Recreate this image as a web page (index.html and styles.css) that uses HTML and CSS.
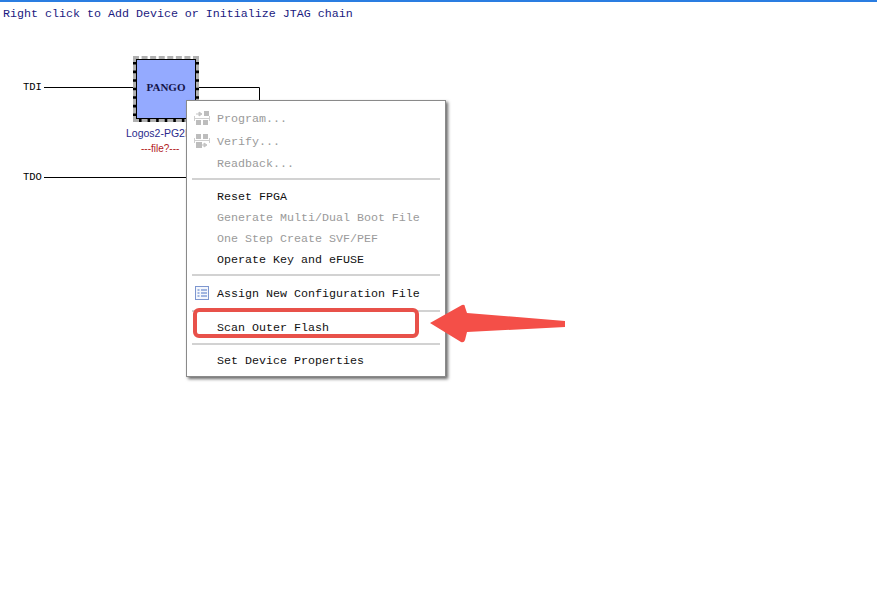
FILE: index.html
```html
<!DOCTYPE html>
<html>
  <head>
    <meta charset="utf-8" />
    <title>JTAG chain</title>
    <link rel="stylesheet" href="styles.css">
  </head>
  <body>
    <div class="hint">Right click to Add Device or Initialize JTAG chain</div>

    <div class="chain">
      <svg class="wires" width="877" height="601">
        <path d="M44 87.5H135M197 87.5H259.5V110M44 177.5H190" fill="none" stroke="#000" stroke-width="1" />
      </svg>
      <span class="pin pin-tdi">TDI</span>
      <span class="pin pin-tdo">TDO</span>
      <div class="chip"><div class="chip-body">PANGO</div></div>
      <div class="chip-name">Logos2-PG2L</div>
      <div class="chip-file">---file?---</div>
    </div>

    <div class="menu">
      <div class="group group-first">
        <div class="item item-tall disabled">
          <span class="icon">
            <svg width="16" height="16" viewBox="0 0 16 16">
              <path d="M0 8.500H16M.5 6V11M15.500 6V11" stroke="#cfcfcf" fill="none" />
              <path d="M2 4H5M5 2L8 4L5 6Z" stroke="#c4c4c4" fill="#c4c4c4" />
              <rect x="10" y="1" width="5" height="5" fill="#bdbdbd" />
              <rect x="2" y="10" width="5" height="5" fill="#bdbdbd" />
              <rect x="9" y="10" width="5" height="5" fill="#bdbdbd" />
            </svg>
          </span>
          Program...
        </div>
        <div class="item item-tall disabled">
          <span class="icon">
            <svg width="16" height="16" viewBox="0 0 16 16">
              <path d="M0 7.500H16M.5 5V10M15.500 5V10" stroke="#cfcfcf" fill="none" />
              <rect x="2" y="1" width="5" height="5" fill="#bdbdbd" />
              <rect x="9" y="1" width="5" height="5" fill="#bdbdbd" />
              <rect x="2" y="9" width="6" height="6" fill="#bdbdbd" />
              <path d="M8 12H10M10 10L13 12L10 14Z" stroke="#c4c4c4" fill="#c4c4c4" />
            </svg>
          </span>
          Verify...
        </div>
        <div class="item item-tall disabled"><span class="icon"></span>Readback...</div>
      </div>
      <div class="sep"></div>
      <div class="group group-reset">
        <div class="item"><span class="icon"></span>Reset FPGA</div>
        <div class="item disabled"><span class="icon"></span>Generate Multi/Dual Boot File</div>
        <div class="item disabled"><span class="icon"></span>One Step Create SVF/PEF</div>
        <div class="item"><span class="icon"></span>Operate Key and eFUSE</div>
      </div>
      <div class="sep"></div>
      <div class="group group-assign">
        <div class="item">
          <span class="icon">
            <svg width="16" height="16" viewBox="0 0 16 16">
              <rect x="1.500" y="1.500" width="13" height="13" fill="#f4f7fd" stroke="#7d96cf" />
              <path d="M3.500 5H5.500M3.500 8H5.500M3.500 11H5.500M7 5H13M7 8H13M7 11H13" stroke="#4f74c4" />
            </svg>
          </span>
          Assign New Configuration File
        </div>
      </div>
      <div class="sep"></div>
      <div class="group group-tail">
        <div class="item"><span class="icon"></span>Scan Outer Flash</div>
      </div>
      <div class="sep"></div>
      <div class="group group-tail">
        <div class="item"><span class="icon"></span>Set Device Properties</div>
      </div>
    </div>

    <div class="callout"></div>
    <svg class="arrow" width="140" height="44" viewBox="0 0 140 44">
      <path d="M1 20L33 2Q36 1 36 4L38 10L136 18V24L38 29L36 37Q35 40 32 39Z" fill="#f44f48" />
    </svg>
  </body>
</html>
```

FILE: styles.css
```css
body {
  margin: 0;
  height: 599px;
  border-top: 2px solid #2a7de1;
  background-color: white;
  font-family: "Liberation Mono", monospace;
  font-size: 11.67px;
  position: relative;
  overflow: hidden;
}

.hint {
  padding: 6px 0 0 3px;
  line-height: 13px;
  color: #1a1a80;
}

/* device chain, positions are the diagram itself */
.chain {
  position: absolute;
  left: 0;
  top: -2px;
  width: 877px;
  height: 601px;
}
.wires {
  position: absolute;
  left: 0;
  top: 0;
}
.pin {
  position: absolute;
  left: 23px;
  line-height: 13px;
  color: #000;
  font-size: 10.5px;
}
.pin-tdi {
  top: 81px;
}
.pin-tdo {
  top: 171px;
}
.chip {
  position: absolute;
  left: 133px;
  top: 56px;
  width: 60px;
  height: 60px;
  background: linear-gradient(to bottom, white 3px, black 3px) border-box;
  border: 3px dashed #b0b0b0;
}
.chip-body {
  display: flex;
  align-items: center;
  justify-content: center;
  box-sizing: border-box;
  height: 100%;
  padding-bottom: 4px;
  border: 1px solid black;
  background-color: #94aaff;
  font-family: "Liberation Serif", serif;
  font-size: 11px;
  font-weight: bold;
  color: #14144a;
}
.chip-name {
  position: absolute;
  left: 126px;
  top: 127px;
  line-height: 13px;
  font-family: "Liberation Sans", sans-serif;
  font-size: 10.5px;
  color: #2a2a8c;
}
.chip-file {
  position: absolute;
  left: 141px;
  top: 142px;
  line-height: 13px;
  font-family: "Liberation Sans", sans-serif;
  font-size: 10px;
  color: #b02020;
}

/* context menu */
.menu {
  position: absolute;
  left: 186px;
  top: 98px;
  width: 248px;
  height: 275px;
  background-color: white;
  border: 1px solid #8a8a8a;
  box-shadow: 2px 2px 3px #6a6a6a;
  padding: 0 5px;
}
.group-first {
  padding: 7px 0 2.5px;
}
.group-reset {
  padding: 6.5px 0 3.5px;
}
.group-assign {
  padding: 7.5px 0 5.5px;
}
.group-tail {
  padding: 5.5px 0 4.5px;
}
.item {
  display: flex;
  align-items: center;
  height: 21px;
  color: #111;
}
.item-tall {
  height: 22.5px;
}
.disabled {
  color: #9a9a9a;
}
.icon {
  display: flex;
  align-items: center;
  width: 23px;
  margin: -2px 0 0 2px;
  flex: none;
}
.sep {
  height: 2px;
  background-color: #d2d2d2;
}

/* annotation drawn over the screenshot */
.callout {
  position: absolute;
  left: 193px;
  top: 306px;
  width: 218px;
  height: 22px;
  border: 4px solid #e8514a;
  border-radius: 6px;
}
.arrow {
  position: absolute;
  left: 429px;
  top: 301px;
}
```
